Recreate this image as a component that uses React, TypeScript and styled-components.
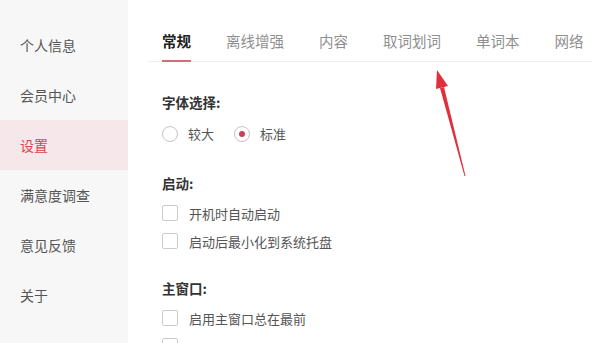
import styled, { createGlobalStyle } from "styled-components"

const GlobalStyle = createGlobalStyle`
  html, body {
    margin: 0;
    padding: 0;
    background: #ffffff;
  }
  body {
    font-family: "Noto Sans CJK SC", "Noto Sans", sans-serif;
  }
`

const Page = styled.div`
  position: relative;
  display: flex;
  width: 600px;
  height: 343px;
  overflow: hidden;
  background: #ffffff;
`

const SideBar = styled.div`
  width: 128px;
  flex-shrink: 0;
  background: #f7f7f7;
  padding-top: 20px;
  display: flex;
  flex-direction: column;
`

const SideItem = styled.div<{ $active?: boolean }>`
  height: 50px;
  display: flex;
  align-items: center;
  padding-left: 20px;
  font-size: 14px;
  color: ${(p) => (p.$active ? "#d9434b" : "#555555")};
  background: ${(p) => (p.$active ? "#f6e8ea" : "transparent")};
`

const Content = styled.div`
  flex: 1;
  padding: 0 8px 0 20px;
`

const TabBar = styled.div`
  display: flex;
  gap: 35px;
  height: 61px;
  padding-left: 14px;
  border-bottom: 1px solid #efefef;
  align-items: stretch;
`

const Tab = styled.div<{ $active?: boolean }>`
  display: flex;
  align-items: flex-end;
  padding-bottom: 9px;
  font-size: 14.5px;
  color: ${(p) => (p.$active ? "#222222" : "#8f8f8f")};
  font-weight: ${(p) => (p.$active ? 700 : 400)};
  border-bottom: 2px solid ${(p) => (p.$active ? "#d96a78" : "transparent")};
  margin-bottom: -1px;
`

const Body = styled.div`
  padding-left: 14px;
`

const Section = styled.div<{ $space: number }>`
  margin-top: ${(p) => p.$space}px;
`

const SectionTitle = styled.div`
  font-size: 13.5px;
  font-weight: 700;
  color: #333333;
  height: 20px;
  line-height: 20px;
`

const RadioRow = styled.div`
  display: flex;
  gap: 20px;
  margin-top: 12px;
`

const RadioOption = styled.label`
  display: flex;
  align-items: center;
  gap: 10px;
  font-size: 13px;
  color: #555555;
`

const RadioCircle = styled.span<{ $checked?: boolean }>`
  width: 16px;
  height: 16px;
  box-sizing: border-box;
  border-radius: 50%;
  border: 1px solid #c4c4c4;
  background: #ffffff;
  display: flex;
  align-items: center;
  justify-content: center;
  &::after {
    content: "";
    width: 6px;
    height: 6px;
    border-radius: 50%;
    background: ${(p) => (p.$checked ? "#c8405a" : "transparent")};
  }
`

const CheckList = styled.div`
  display: flex;
  flex-direction: column;
  gap: 10px;
  margin-top: 11px;
`

const CheckOption = styled.label`
  display: flex;
  align-items: center;
  gap: 11px;
  font-size: 13px;
  color: #555555;
  height: 18px;
`

const CheckBox = styled.span`
  width: 16px;
  height: 16px;
  box-sizing: border-box;
  border: 1px solid #cccccc;
  border-radius: 2px;
  background: #ffffff;
`

const Arrow = styled.svg`
  position: absolute;
  left: 425px;
  top: 62px;
  pointer-events: none;
`

const menu = ["个人信息", "会员中心", "设置", "满意度调查", "意见反馈", "关于"]
const tabs = ["常规", "离线增强", "内容", "取词划词", "单词本", "网络"]

export default function App() {
  return (
    <>
      <GlobalStyle />
      <Page>
        <SideBar>
          {menu.map((m) => (
            <SideItem key={m} $active={m === "设置"}>
              {m}
            </SideItem>
          ))}
        </SideBar>
        <Content>
          <TabBar>
            {tabs.map((t, i) => (
              <Tab key={t} $active={i === 0}>
                {t}
              </Tab>
            ))}
          </TabBar>
          <Body>
            <Section $space={30}>
              <SectionTitle>字体选择:</SectionTitle>
              <RadioRow>
                <RadioOption>
                  <RadioCircle />
                  较大
                </RadioOption>
                <RadioOption>
                  <RadioCircle $checked />
                  标准
                </RadioOption>
              </RadioRow>
            </Section>
            <Section $space={30}>
              <SectionTitle>启动:</SectionTitle>
              <CheckList>
                <CheckOption>
                  <CheckBox />
                  开机时自动启动
                </CheckOption>
                <CheckOption>
                  <CheckBox />
                  启动后最小化到系统托盘
                </CheckOption>
              </CheckList>
            </Section>
            <Section $space={28}>
              <SectionTitle>主窗口:</SectionTitle>
              <CheckList>
                <CheckOption>
                  <CheckBox />
                  启用主窗口总在最前
                </CheckOption>
                <CheckOption>
                  <CheckBox />
                </CheckOption>
              </CheckList>
            </Section>
          </Body>
        </Content>
        <Arrow width="50" height="120" viewBox="0 0 50 120">
          <path d="M40.5 114 L39.5 114 L15 26 L19 25 Z" fill="#e0303c" />
          <path d="M12 8 L23 24 L11 27 Z" fill="#e0303c" />
        </Arrow>
      </Page>
    </>
  )
}
